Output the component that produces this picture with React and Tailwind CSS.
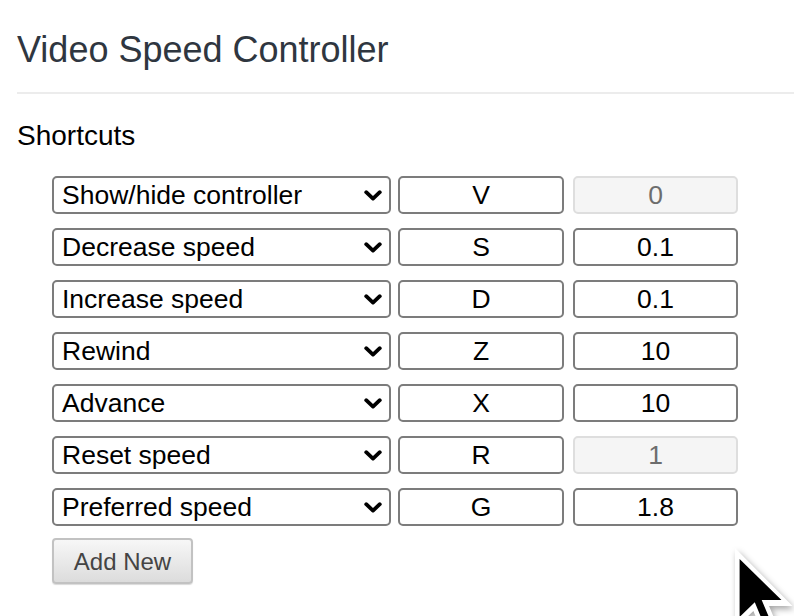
import React from "react";

const rows = [
  { action: "Show/hide controller", key: "V", value: "0", disabled: true },
  { action: "Decrease speed", key: "S", value: "0.1" },
  { action: "Increase speed", key: "D", value: "0.1" },
  { action: "Rewind", key: "Z", value: "10" },
  { action: "Advance", key: "X", value: "10" },
  { action: "Reset speed", key: "R", value: "1", disabled: true },
  { action: "Preferred speed", key: "G", value: "1.8" },
];

function Chevron() {
  return (
    <svg width="18" height="11" viewBox="0 0 18 11" className="shrink-0">
      <path d="M2.2 2.2 L9 8.6 L15.8 2.2" fill="none" stroke="#000" strokeWidth="3.8" strokeLinecap="round" strokeLinejoin="round" />
    </svg>
  );
}

function Cursor() {
  return (
    <svg
      className="absolute left-[730px] top-[544px]"
      width="70"
      height="90"
      viewBox="0 0 70 90"
      style={{ filter: "drop-shadow(2px 3px 3px rgba(0,0,0,0.35))" }}
    >
      <g transform="translate(5 4) scale(4.6)">
        <path d="M0 0 L0 17.5 L4 13.7 L6.5 19.7 L9.8 18.3 L7.4 12.6 L12.5 12.6 Z" fill="#fff" />
        <path d="M1 2.4 L1 15 L4.3 11.8 L7 18.3 L8.5 17.7 L5.8 11.3 L10.1 11.3 Z" fill="#000" />
      </g>
    </svg>
  );
}

export default function App() {
  return (
    <div
      className="relative w-[794px] h-[616px] overflow-hidden bg-white pl-[17px] pt-[29px]"
      style={{ fontFamily: '"Liberation Sans", Arial, sans-serif' }}
    >
      <h1 className="text-[36px] leading-[42px] text-[#2f3640] font-normal">Video Speed Controller</h1>
      <div className="mt-[21px] border-t-2 border-[#ececec]" />
      <h2 className="mt-[26px] text-[28px] leading-[32px] text-black font-normal">Shortcuts</h2>
      <div className="mt-[24px] ml-[35px] flex flex-col gap-[14px]">
        {rows.map((r) => (
          <div key={r.action} className="flex items-center h-[38px]">
            <div className="w-[339px] h-[38px] flex items-center justify-between border-2 border-[#7c7c7c] rounded-[5px] pl-[8px] pr-[7px] pt-[1px] text-[26.5px] text-black">
              <span>{r.action}</span>
              <Chevron />
            </div>
            <div className="ml-[7px] w-[166px] h-[38px] flex items-center justify-center border-2 border-[#7c7c7c] rounded-[5px] pt-[1px] text-[26.5px] text-black">
              {r.key}
            </div>
            <div
              className={
                r.disabled
                  ? "ml-[9px] w-[165px] h-[38px] flex items-center justify-center border-2 border-[#dedede] bg-[#f5f5f5] rounded-[5px] pt-[1px] text-[26.5px] text-[#6d6d6d]"
                  : "ml-[9px] w-[165px] h-[38px] flex items-center justify-center border-2 border-[#7c7c7c] rounded-[5px] pt-[1px] text-[26.5px] text-black"
              }
            >
              {r.value}
            </div>
          </div>
        ))}
        <div className="-mt-[2px]">
          <button className="w-[141px] h-[46px] flex items-center justify-center border-2 border-[#c2c2c2] rounded-[4px] bg-gradient-to-b from-[#f7f7f7] to-[#dcdcdc] pt-[1px] text-[24px] text-[#444] shadow-[0_1px_1px_rgba(0,0,0,0.15)]">
            Add New
          </button>
        </div>
      </div>
      <Cursor />
    </div>
  );
}
